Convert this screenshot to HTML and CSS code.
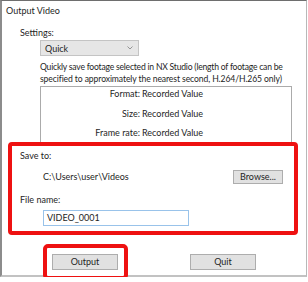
FILE: index.html
```html
<!DOCTYPE html>
<html>
<head>
<meta charset="utf-8">
<link rel="stylesheet" href="styles.css">
</head>
<body>
<div class="window">
  <div class="title">Output Video</div>
  <div class="label settings">Settings:</div>
  <div class="select"><span>Quick</span><svg class="chev" width="6" height="4" viewBox="0 0 6 4"><path d="M0.5 0.5 L3 3 L5.5 0.5" fill="none" stroke="#8a8a8a" stroke-width="0.9"/></svg></div>
  <div class="desc"><span class="tight">Quickly save footage selected in NX Studio (length of footage can be</span><br>specified to approximately the nearest second, H.264/H.265 only)</div>
  <div class="info">
    <span class="k">Format:</span><span>Recorded Value</span>
    <span class="k">Size:</span><span>Recorded Value</span>
    <span class="k">Frame rate:</span><span>Recorded Value</span>
  </div>
  <div class="highlight save">
    <div class="label">Save to:</div>
    <div class="pathrow">
      <span class="path">C:\Users\user\Videos</span>
      <button class="btn browse">Browse...</button>
    </div>
    <div class="label fname">File name:</div>
    <div class="input">VIDEO_0001</div>
  </div>
  <div class="buttons">
    <div class="highlight outwrap"><button class="btn">Output</button></div>
    <button class="btn quit">Quit</button>
  </div>
</div>
</body>
</html>
```
FILE: styles.css
```css
html, body { margin: 0; padding: 0; background: #fff; }
body { font-family: Lato, "Open Sans", sans-serif; font-size: 9px; color: #1e1e1e; }
.window {
  box-sizing: border-box;
  width: 307px;
  height: 277px;
  border-top: 1px solid #6e6e6e;
  border-left: 2px solid #8c8c8c;
  border-right: 1px solid #b8b8b8;
  border-bottom: 2px solid #c2c2c2;
  background: #fff;
}
.title { padding: 3px 0 0 4px; height: 14px; line-height: 14px; }
.label { line-height: 14px; height: 14px; }
.settings { margin: 8px 0 0 18px; }
.select {
  box-sizing: border-box;
  margin: 0 0 0 38px;
  width: 99px; height: 16px;
  border: 1px solid #c4c4c4;
  background: #e6e6e6;
  display: flex; justify-content: space-between; align-items: center;
  padding: 0 4px 0 4px;
}
.chev { margin-right: 1px; }
.desc { margin: 5px 0 0 38px; line-height: 12px; height: 24px; white-space: nowrap; font-size: 8.6px; letter-spacing: -0.1px; }
.tight { letter-spacing: -0.22px; }
.info {
  box-sizing: border-box;
  margin: 1px 0 0 38px;
  width: 252px; height: 56px;
  border: 1px solid #ababab;
  border-bottom: none;
  display: grid;
  grid-template-columns: 99px auto;
  grid-auto-rows: 19.5px;
  column-gap: 2px;
  line-height: 14px;
}
.k { text-align: right; }
.highlight { border: 4px solid #ee1111; border-radius: 4px; background: #fff; }
.save {
  box-sizing: border-box;
  margin: 0 0 0 6px;
  width: 290px; height: 93px;
  padding: 3px 0 0 8px;
}
.pathrow { display: flex; align-items: center; justify-content: space-between; margin: 6px 0 0 23px; width: 240px; height: 15px; }
.path { line-height: 14px; }
.btn {
  box-sizing: border-box;
  font: inherit; color: #1e1e1e;
  background: #e1e1e1; border: 1px solid #adadad;
  padding: 0; height: 16px; line-height: 14px;
}
.browse { width: 50px; height: 14px; line-height: 12px; }
.fname { margin-top: 9px; }
.input {
  box-sizing: border-box;
  margin: 3px 0 0 23px;
  width: 146px; height: 16px;
  border: 1px solid #99c3ea;
  padding-left: 3px; line-height: 14px;
}
.buttons { display: flex; align-items: center; margin: 9px 0 0 41px; gap: 62px; }
.outwrap { box-sizing: border-box; padding: 6px 6px 6px 5px; width: 85px; height: 36px; border-radius: 5px; position: relative; }
.outwrap .btn, .quit { width: 66px; height: 16px; }
```
